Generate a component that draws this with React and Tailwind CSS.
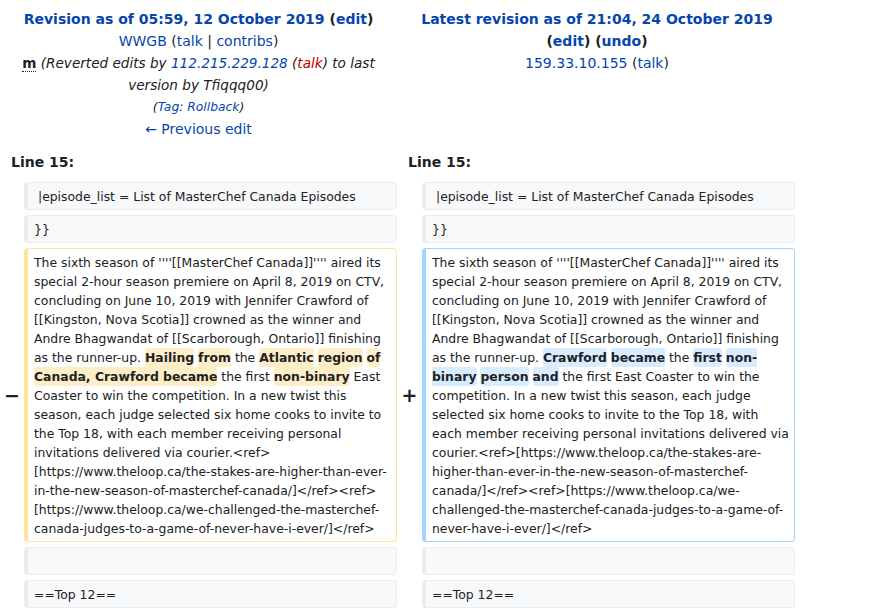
import React from 'react';

const font = { fontFamily: '"DejaVu Sans", sans-serif' };

function Hl({ kind, children }) {
  return (
    <span
      className={[
        'rounded-[3px] py-[2px] font-bold',
        kind === 'del' ? 'bg-[#feeec8]' : 'bg-[#d8ecff]',
      ].join(' ')}
    >
      {children}
    </span>
  );
}

function Box({ kind = 'ctx', children }) {
  const tone =
    kind === 'del'
      ? 'border-[#ffe49c] bg-white'
      : kind === 'add'
        ? 'border-[#a3d3ff] bg-white'
        : 'border-[#eaecf0] bg-[#f8f9fa]';
  return (
    <div
      className={[
        'rounded-[4px] border border-l-4 pl-[6px] pr-[2px] py-[3.5px] text-[12.4px] leading-[19px] text-[#202122] break-words whitespace-pre-wrap',
        tone,
      ].join(' ')}
    >
      {children}
    </div>
  );
}

function Marker({ children }) {
  return (
    <div className="flex items-center justify-center text-[19px] font-bold text-[#202122]">
      {children}
    </div>
  );
}

export default function App() {
  return (
    <div className="w-[797px] bg-white pt-[8px] text-[#202122]" style={font}>
      <div className="grid grid-cols-[397px_400px] text-center text-[14px] leading-[22px]">
        <div>
          <div className="font-bold">
            <a className="text-[#0645ad]">Revision as of 05:59, 12 October 2019</a>{' '}
            (<a className="text-[#0645ad]">edit</a>)
          </div>
          <div>
            <a className="text-[#0645ad]">WWGB</a> (<a className="text-[#0645ad]">talk</a> |{' '}
            <a className="text-[#0645ad]">contribs</a>)
          </div>
          <div className="px-[8px] text-[13.6px]">
            <abbr className="font-bold no-underline border-b border-dotted border-[#202122]">m</abbr>{' '}
            <span className="italic">
              (Reverted edits by <a className="text-[#0645ad]">112.215.229.128</a> (
              <a className="text-[#ba0000]">talk</a>) to last version by Tfiqqq00)
            </span>
          </div>
          <div className="text-[12.3px] italic">
            (<a className="text-[#0645ad]">Tag</a>: <a className="text-[#0645ad]">Rollback</a>)
          </div>
          <div>
            <a className="text-[#0645ad]">← Previous edit</a>
          </div>
        </div>
        <div>
          <div className="font-bold">
            <a className="text-[#0645ad]">Latest revision as of 21:04, 24 October 2019</a>
          </div>
          <div className="font-bold">
            (<a className="text-[#0645ad]">edit</a>) (<a className="text-[#0645ad]">undo</a>)
          </div>
          <div>
            <a className="text-[#0645ad]">159.33.10.155</a> (<a className="text-[#0645ad]">talk</a>)
          </div>
        </div>
      </div>

      <div className="mt-[11px] grid grid-cols-[24px_373px_25px_373px] gap-y-[5px]">
        <div className="col-span-2 pb-[4px] pl-[11px] text-[14px] font-bold leading-[22px]">Line 15:</div>
        <div className="col-span-2 pb-[4px] pl-[11px] text-[14px] font-bold leading-[22px]">Line 15:</div>

        <div />
        <Box>{' |episode_list = List of MasterChef Canada Episodes'}</Box>
        <div />
        <Box>{' |episode_list = List of MasterChef Canada Episodes'}</Box>

        <div />
        <Box>{'}}'}</Box>
        <div />
        <Box>{'}}'}</Box>

        <Marker>−</Marker>
        <Box kind="del">
          The sixth season of ''''[[MasterChef Canada]]'''' aired its special 2-hour season premiere on
          April 8, 2019 on CTV, concluding on June 10, 2019 with Jennifer Crawford of [[Kingston, Nova
          Scotia]] crowned as the winner and Andre Bhagwandat of [[Scarborough, Ontario]] finishing as the
          runner-up. <Hl kind="del">Hailing</Hl> <Hl kind="del">from</Hl> the{' '}
          <Hl kind="del">Atlantic</Hl> <Hl kind="del">region</Hl> <Hl kind="del">of</Hl>{' '}
          <Hl kind="del">Canada, Crawford became</Hl> the first <Hl kind="del">non-binary</Hl> East
          Coaster to win the competition. In a new twist this season, each judge selected six home cooks
          to invite to the Top 18, with each member receiving personal invitations delivered via
          courier.&lt;ref&gt;[https://www.theloop.ca/the-stakes-are-higher-than-ever-in-the-new-season-of-masterchef-canada/]&lt;/ref&gt;&lt;ref&gt;[https://www.theloop.ca/we-challenged-the-masterchef-canada-judges-to-a-game-of-never-have-i-ever/]&lt;/ref&gt;
        </Box>
        <Marker>+</Marker>
        <Box kind="add">
          The sixth season of ''''[[MasterChef Canada]]'''' aired its special 2-hour season premiere on
          April 8, 2019 on CTV, concluding on June 10, 2019 with Jennifer Crawford of [[Kingston, Nova
          Scotia]] crowned as the winner and Andre Bhagwandat of [[Scarborough, Ontario]] finishing as the
          runner-up. <Hl kind="add">Crawford</Hl> <Hl kind="add">became</Hl> the{' '}
          <Hl kind="add">first</Hl> <Hl kind="add">non-binary</Hl> <Hl kind="add">person</Hl>{' '}
          <Hl kind="add">and</Hl> the first East Coaster to win the competition. In a new twist this
          season, each judge selected six home cooks to invite to the Top 18, with each member receiving
          personal invitations delivered via
          courier.&lt;ref&gt;[https://www.theloop.ca/the-stakes-are-higher-than-ever-in-the-new-season-of-masterchef-canada/]&lt;/ref&gt;&lt;ref&gt;[https://www.theloop.ca/we-challenged-the-masterchef-canada-judges-to-a-game-of-never-have-i-ever/]&lt;/ref&gt;
        </Box>

        <div />
        <Box>{'\u00a0'}</Box>
        <div />
        <Box>{'\u00a0'}</Box>

        <div />
        <Box>==Top 12==</Box>
        <div />
        <Box>==Top 12==</Box>
      </div>
    </div>
  );
}
